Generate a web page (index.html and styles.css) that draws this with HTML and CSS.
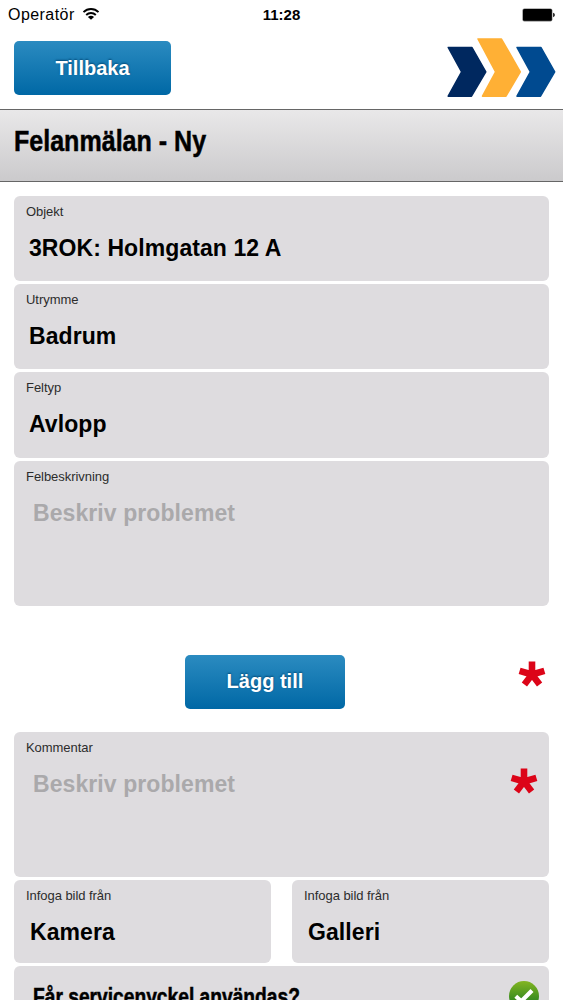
FILE: index.html
```html
<!DOCTYPE html>
<html lang="sv">
<head>
    <meta charset="UTF-8">
    <meta name="viewport" content="width=device-width, initial-scale=1.0">
    <title>Felanmälan</title>
    <link rel="stylesheet" href="styles.css">
</head>
<body>
    <div class="statusbar">
        <div class="carrier">
            <span class="operator">Operatör</span>
            <svg class="wifi" width="18" height="14" viewBox="0 0 18 14">
                <path d="M1.5 5.2C5.7 1 12.3 1 16.5 5.2" fill="none" stroke="#000" stroke-width="1.9"/>
                <path d="M4.2 8C6.9 5.3 11.1 5.3 13.8 8" fill="none" stroke="#000" stroke-width="1.9"/>
                <path d="M9 12.8L5.9 9.9C7.6 8.3 10.4 8.3 12.1 9.9Z"/>
            </svg>
        </div>
        <div class="time">11:28</div>
        <svg class="battery" width="33" height="14" viewBox="0 0 33 14">
            <rect x="0.4" y="0.4" width="30" height="13" rx="2" fill="#777"/>
            <rect x="1" y="1" width="28.8" height="11.8" rx="1.5"/>
            <path d="M31.2 4.8Q32.8 5.4 32.8 7T31.2 9.2Z"/>
        </svg>
    </div>

    <div class="header">
        <button class="btn btn-back">Tillbaka</button>
        <svg class="logo" width="110" height="60" viewBox="0 0 110 60">
            <g stroke-width="1.5" stroke-linejoin="round">
                <path d="M1.2 9.5H25L38.8 33.8L24.5 58.2H1.2L14.6 33.8Z" fill="#00285f" stroke="#00285f"/>
                <path d="M31 1H54.5L73.3 33.8L59 58.2H35.5L48.6 33.8Z" fill="#ffb035" stroke="#ffb035"/>
                <path d="M70 9.5H94L107.7 33.8L93.5 58.2H70L83.4 33.8Z" fill="#004a90" stroke="#004a90"/>
            </g>
        </svg>
    </div>

    <div class="title"><h1 class="condensed">Felanmälan - Ny</h1></div>

    <div class="form">
        <div class="field">
            <label>Objekt</label>
            <div class="value">3ROK: Holmgatan 12 A</div>
        </div>
        <div class="field">
            <label>Utrymme</label>
            <div class="value">Badrum</div>
        </div>
        <div class="field">
            <label>Feltyp</label>
            <div class="value">Avlopp</div>
        </div>
        <div class="field field-text">
            <label>Felbeskrivning</label>
            <div class="value placeholder">Beskriv problemet</div>
        </div>

        <div class="add-row">
            <button class="btn btn-add">Lägg till</button>
            <svg class="star" width="28" height="26" viewBox="0 0 28 26">
                <path d="M14 13.5V0.5M14 13.5L1.6 9.8M14 13.5L26.4 9.8M14 13.5L6.4 23.4M14 13.5L21.6 23.4" stroke="#dc0418" stroke-width="6.6"/>
            </svg>
        </div>

        <div class="field field-text field-comment">
            <div>
                <label>Kommentar</label>
                <div class="value placeholder">Beskriv problemet</div>
            </div>
            <svg class="star" width="28" height="26" viewBox="0 0 28 26">
                <path d="M14 13.5V0.5M14 13.5L1.6 9.8M14 13.5L26.4 9.8M14 13.5L6.4 23.4M14 13.5L21.6 23.4" stroke="#dc0418" stroke-width="6.6"/>
            </svg>
        </div>

        <div class="images">
            <div class="field field-image">
                <label>Infoga bild från</label>
                <div class="value">Kamera</div>
            </div>
            <div class="field field-image">
                <label>Infoga bild från</label>
                <div class="value">Galleri</div>
            </div>
        </div>

        <div class="field field-key">
            <span class="question condensed">Får servicenyckel användas?</span>
            <svg class="check" width="30" height="30" viewBox="0 0 30 30">
                <defs>
                    <linearGradient id="green" x1="0" y1="0" x2="0" y2="1">
                        <stop offset="0" stop-color="#83b522"/>
                        <stop offset="0.6" stop-color="#3d8e20"/>
                        <stop offset="1" stop-color="#2b7d1c"/>
                    </linearGradient>
                </defs>
                <circle cx="15" cy="15" r="15" fill="url(#green)"/>
                <path d="M6.8 15.2L12.3 20.2L23 9.5" fill="none" stroke="#fff" stroke-width="4.2"/>
            </svg>
        </div>
    </div>
</body>
</html>
```

FILE: styles.css
```css
* {
    box-sizing: border-box;
}

body {
    margin: 0;
    height: 1000px;
    overflow: hidden;
    background-color: #fff;
    color: #000;
    font-family: "Liberation Sans", Arial, sans-serif;
}

.statusbar {
    display: grid;
    grid-template-columns: 1fr auto 1fr;
    align-items: center;
    height: 29px;
    padding: 0 8px;
}

.carrier {
    display: flex;
    align-items: center;
    gap: 7px;
    font-size: 16px;
    letter-spacing: 0.45px;
}

.wifi {
    margin-top: -2px;
}

.time {
    font-size: 15px;
    font-weight: bold;
}

.battery {
    justify-self: end;
}

.header {
    display: flex;
    justify-content: space-between;
    align-items: flex-start;
    height: 80px;
    padding: 9px 6px 0 14px;
}

.btn {
    height: 54px;
    padding: 0;
    border: none;
    border-radius: 5px;
    background: linear-gradient(#2b8bc0, #0068a5);
    color: #fff;
    font-family: inherit;
    font-size: 20px;
    font-weight: bold;
    text-shadow: 0 -1px 2px #044a78;
}

.btn-back {
    width: 157px;
    margin-top: 3px;
}

.btn-add {
    width: 159.5px;
}

.title {
    height: 73px;
    padding: 13px 14px 0;
    border-top: 1px solid #666;
    border-bottom: 1px solid #666;
    background: linear-gradient(#e9e8e9, #cbcacc);
}

.title h1 {
    margin: 0;
    font-size: 30px;
    line-height: 36px;
}

.condensed {
    transform: scaleX(0.835);
    transform-origin: left;
    -webkit-text-stroke: 0.5px #000;
}

.form {
    display: flex;
    flex-direction: column;
    gap: 3px;
    padding: 14px 14px 0;
}

.field {
    height: 85.2px;
    padding: 8px 12px 0;
    border-radius: 6px;
    background-color: #dedcdf;
}

.field label {
    display: block;
    color: #2c2c2c;
    font-size: 13px;
    line-height: 16px;
    letter-spacing: -0.05px;
}

.value {
    margin-top: 14px;
    padding-left: 3px;
    font-size: 23px;
    font-weight: bold;
    line-height: 28px;
    letter-spacing: 0.08px;
}

.placeholder {
    padding-left: 7px;
    color: #aaa9ab;
}

.field-text {
    height: 145.2px;
}

.add-row {
    display: grid;
    grid-template-columns: 171.2px auto 1fr;
    height: 120.2px;
    padding: 46px 3px 0 0;
}

.add-row .btn {
    grid-column: 2;
}

.add-row .star {
    justify-self: end;
    margin-top: 6px;
}

.field-comment {
    display: flex;
    justify-content: space-between;
    padding-right: 11px;
}

.field-comment .star {
    margin-top: 28px;
}

.images {
    display: grid;
    grid-template-columns: 1fr 1fr;
    gap: 21px;
}

.field-image {
    height: 82.5px;
}

.field-image .value {
    padding-left: 4px;
}

.field-key {
    display: flex;
    justify-content: space-between;
    height: 60px;
    padding: 15px 10px 0 19px;
}

.question {
    font-size: 23px;
    font-weight: bold;
    height: 30px;
    line-height: 33px;
    white-space: nowrap;
}
```
